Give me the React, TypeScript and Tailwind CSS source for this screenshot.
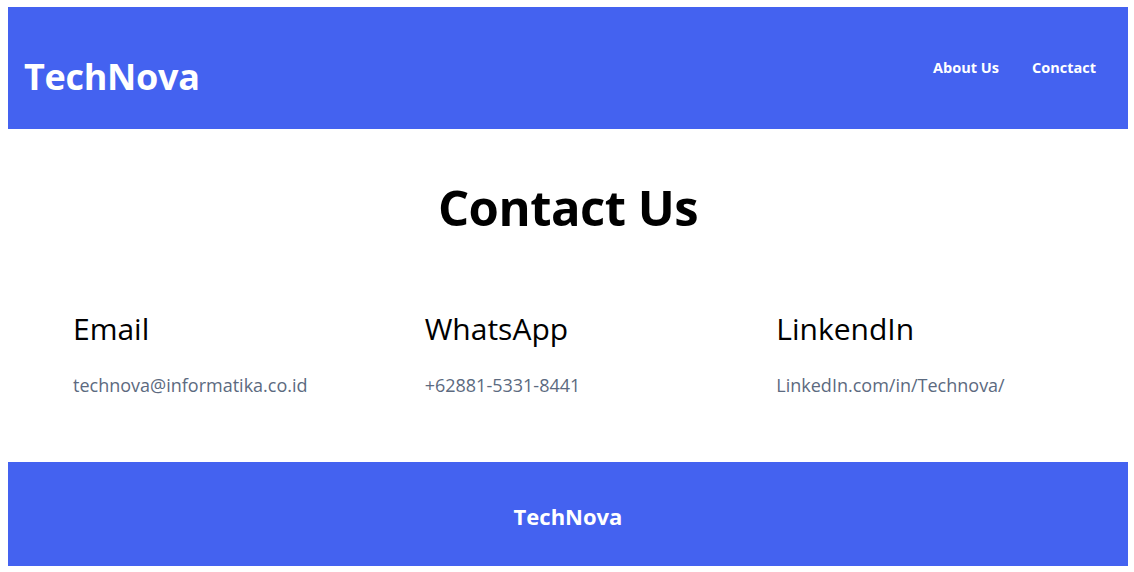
export default function App() {
  const items = [
    { title: 'Email', value: 'technova@informatika.co.id' },
    { title: 'WhatsApp', value: '+62881-5331-8441' },
    { title: 'LinkendIn', value: 'LinkedIn.com/in/Technova/' },
  ]

  return (
    <div className="pl-2 pr-[6px] pt-[7px] font-['Open_Sans',sans-serif] bg-white">
      <header className="h-[122px] bg-[#4462f0] flex items-center justify-between pl-4 pr-8">
        <h1 className="pt-[18px] text-[36px] font-bold text-white leading-none tracking-[-0.3px]">
          TechNova
        </h1>
        <nav className="flex items-center gap-[33px] text-[14.5px] font-bold text-white">
          <a href="#">About Us</a>
          <a href="#">Conctact</a>
        </nav>
      </header>

      <main className="h-[333px]">
        <h2 className="pt-[54px] text-center text-[49px] font-bold text-black leading-none tracking-[-0.5px]">
          Contact Us
        </h2>
        <div className="grid grid-cols-3 pl-[65px] mt-[82px]">
          {items.map((item) => (
            <div key={item.title}>
              <h3 className="text-[30px] text-black leading-none">{item.title}</h3>
              <p className="mt-[32px] text-[18px] text-[#5c6a80] leading-none">{item.value}</p>
            </div>
          ))}
        </div>
      </main>

      <footer className="h-[104px] bg-[#4462f0] flex items-center justify-center">
        <p className="pt-1 text-[22px] font-bold text-white">TechNova</p>
      </footer>
    </div>
  )
}
